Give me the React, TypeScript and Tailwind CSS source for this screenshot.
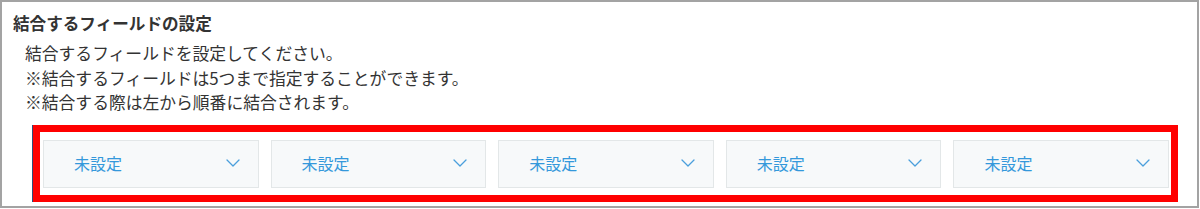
import React from "react";

const font = { fontFamily: '"Noto Sans CJK JP", "Noto Sans", sans-serif' };

function Chevron() {
  return (
    <svg width="14" height="8" viewBox="0 0 14 8" fill="none">
      <path d="M1 1 L7 7 L13 1" stroke="#4a9fdc" strokeWidth="1.3" strokeLinecap="round" strokeLinejoin="round" />
    </svg>
  );
}

function Dropdown() {
  return (
    <div className="h-[48px] bg-[#f7f9fa] border border-[#e3e7e8] flex items-center justify-between pl-[30px] pr-[18px] pb-[2px]">
      <span className="text-[16px] text-[#3498db] leading-[20px]">未設定</span>
      <Chevron />
    </div>
  );
}

export default function App() {
  return (
    <div style={font} className="w-[1199px] h-[208px] border-2 border-[#a3a3a3] bg-white text-[#333333]">
      <div className="pt-[9px] pl-[11px] text-[16.6px] font-bold leading-[24px] text-[#333333]">
        結合するフィールドの設定
      </div>
      <div className="mt-[6px] pl-[23px] text-[16.8px] leading-[24.5px] text-[#333333]">
        <div>結合するフィールドを設定してください。</div>
        <div>※結合するフィールドは5つまで指定することができます。</div>
        <div>※結合する際は左から順番に結合されます。</div>
      </div>
      <div className="mt-[10px] ml-[30px] flex">
        <div className="border-l border-[#2f4d7a]">
          <div className="w-[1145px] h-[77px] border-[7px] border-[#ff0000]">
            <div className="pt-[8px] pl-[3px] pr-[2px] grid grid-cols-5 gap-[12px]">
              <Dropdown />
              <Dropdown />
              <Dropdown />
              <Dropdown />
              <Dropdown />
            </div>
          </div>
        </div>
      </div>
    </div>
  );
}
